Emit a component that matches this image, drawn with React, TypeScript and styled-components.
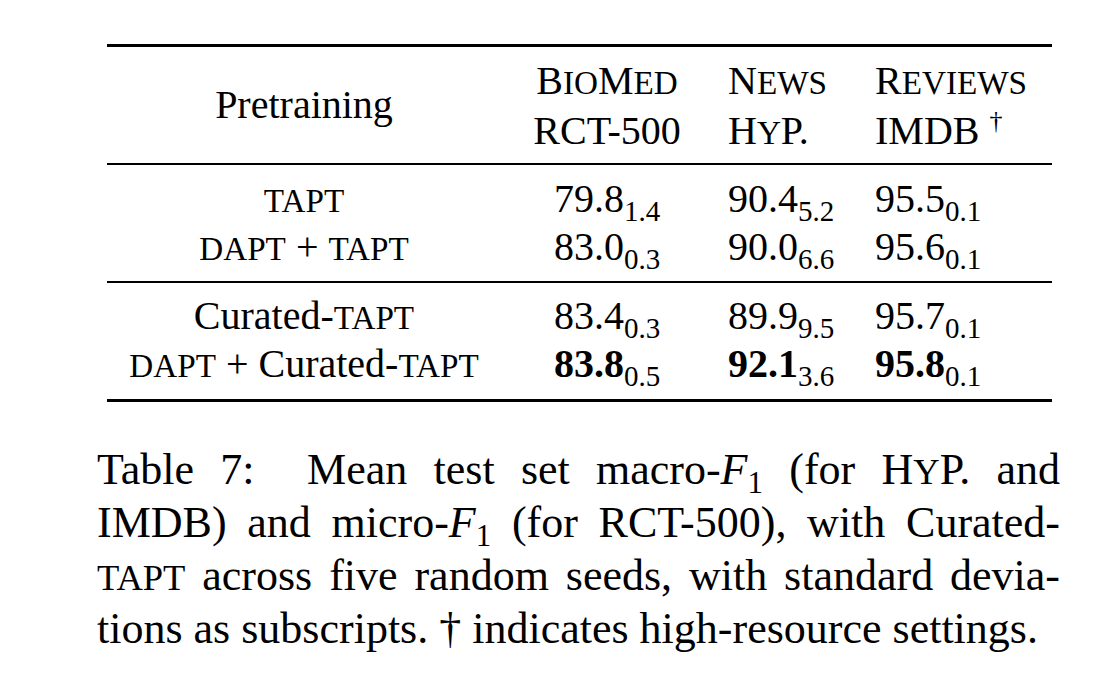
import styled, { createGlobalStyle } from "styled-components"

const GlobalStyle = createGlobalStyle`
  html, body {
    margin: 0;
    padding: 0;
    background: #ffffff;
  }
  body {
    font-family: "Liberation Serif", "Times New Roman", serif;
    color: #000000;
  }
`

const Page = styled.div`
  width: 1094px;
  height: 698px;
  padding-top: 44px;
  box-sizing: border-box;
  overflow: hidden;
`

const Table = styled.div`
  margin-left: 107px;
  width: 945px;
  font-size: 40px;
`

const Rule = styled.div<{ $weight: number }>`
  height: ${p => p.$weight}px;
  background: #000000;
`

const Group = styled.div<{ $top: number; $bottom: number }>`
  padding: ${p => p.$top}px 0 ${p => p.$bottom}px;
`

const Row = styled.div<{ $lines?: number }>`
  display: grid;
  grid-template-columns: 394px 212px 147px 192px;
  grid-template-rows: ${p => (p.$lines ?? 1) * 48}px;
  line-height: 48px;
  white-space: nowrap;
`

const Cell = styled.div<{ $align?: "center" | "left" }>`
  text-align: ${p => (p.$align === "left" ? "left" : "center")};
  padding-left: ${p => (p.$align === "left" ? "15px" : "0")};
  overflow: visible;
`

const HeadLabel = styled(Cell)`
  display: flex;
  align-items: center;
  justify-content: center;
`

const Sc = styled.span`
  font-size: 0.83em;
  text-transform: uppercase;
`

const Sub = styled.span`
  font-size: 29px;
  line-height: 0;
  vertical-align: -9px;
`

const Sup = styled.span`
  font-size: 26px;
  line-height: 0;
  vertical-align: 15px;
`

const Bold = styled.span`
  font-weight: 700;
`

const Caption = styled.div`
  margin-top: 41px;
  margin-left: 97px;
  width: 963px;
  font-size: 44px;
`

const CaptionLine = styled.div<{ $justify?: boolean }>`
  height: 53px;
  line-height: 53px;
  white-space: nowrap;
  text-align: ${p => (p.$justify ? "justify" : "left")};
  text-align-last: ${p => (p.$justify ? "justify" : "left")};
`

const Math = styled.i`
  font-style: italic;
`

const MathSub = styled.span`
  font-size: 31px;
  line-height: 0;
  vertical-align: -9px;
`

type Score = { mean: string; sd: string; best?: boolean }

type Result = { label: React.ReactNode; scores: Score[] }

const Value = ({ mean, sd, best }: Score) => (
  <>
    {best ? <Bold>{mean}</Bold> : mean}
    <Sub>{sd}</Sub>
  </>
)

const baseline: Result[] = [
  {
    label: <Sc>tapt</Sc>,
    scores: [
      { mean: "79.8", sd: "1.4" },
      { mean: "90.4", sd: "5.2" },
      { mean: "95.5", sd: "0.1" },
    ],
  },
  {
    label: (
      <>
        <Sc>dapt</Sc> + <Sc>tapt</Sc>
      </>
    ),
    scores: [
      { mean: "83.0", sd: "0.3" },
      { mean: "90.0", sd: "6.6" },
      { mean: "95.6", sd: "0.1" },
    ],
  },
]

const curated: Result[] = [
  {
    label: (
      <>
        Curated-<Sc>tapt</Sc>
      </>
    ),
    scores: [
      { mean: "83.4", sd: "0.3" },
      { mean: "89.9", sd: "9.5" },
      { mean: "95.7", sd: "0.1" },
    ],
  },
  {
    label: (
      <>
        <Sc>dapt</Sc> + Curated-<Sc>tapt</Sc>
      </>
    ),
    scores: [
      { mean: "83.8", sd: "0.5", best: true },
      { mean: "92.1", sd: "3.6", best: true },
      { mean: "95.8", sd: "0.1", best: true },
    ],
  },
]

const ResultRow = ({ label, scores }: Result) => (
  <Row>
    <Cell>{label}</Cell>
    <Cell>
      <Value {...scores[0]} />
    </Cell>
    <Cell $align="left">
      <Value {...scores[1]} />
    </Cell>
    <Cell $align="left">
      <Value {...scores[2]} />
    </Cell>
  </Row>
)

export default function App() {
  return (
    <Page>
      <GlobalStyle />
      <Table>
        <Rule $weight={3} />
        <Group $top={10} $bottom={10}>
          <Row $lines={2}>
            <HeadLabel>Pretraining</HeadLabel>
            <Cell>
              B<Sc>io</Sc>M<Sc>ed</Sc>
              <br />
              RCT-500
            </Cell>
            <Cell $align="left">
              N<Sc>ews</Sc>
              <br />
              H<Sc>y</Sc>P.
            </Cell>
            <Cell $align="left">
              R<Sc>eviews</Sc>
              <br />
              IMDB <Sup>†</Sup>
            </Cell>
          </Row>
        </Group>
        <Rule $weight={2} />
        <Group $top={10} $bottom={10}>
          {baseline.map((r, i) => (
            <ResultRow key={i} {...r} />
          ))}
        </Group>
        <Rule $weight={1.5} />
        <Group $top={9} $bottom={11}>
          {curated.map((r, i) => (
            <ResultRow key={i} {...r} />
          ))}
        </Group>
        <Rule $weight={3} />
      </Table>
      <Caption>
        <CaptionLine $justify>
          Table 7:&nbsp; Mean test set macro-<Math>F</Math>
          <MathSub>1</MathSub> (for H<Sc>y</Sc>P. and
        </CaptionLine>
        <CaptionLine $justify>
          IMDB) and micro-<Math>F</Math>
          <MathSub>1</MathSub> (for RCT-500), with Curated-
        </CaptionLine>
        <CaptionLine $justify>
          <Sc>tapt</Sc> across five random seeds, with standard devia-
        </CaptionLine>
        <CaptionLine>
          tions as subscripts. † indicates high-resource settings.
        </CaptionLine>
      </Caption>
    </Page>
  )
}
